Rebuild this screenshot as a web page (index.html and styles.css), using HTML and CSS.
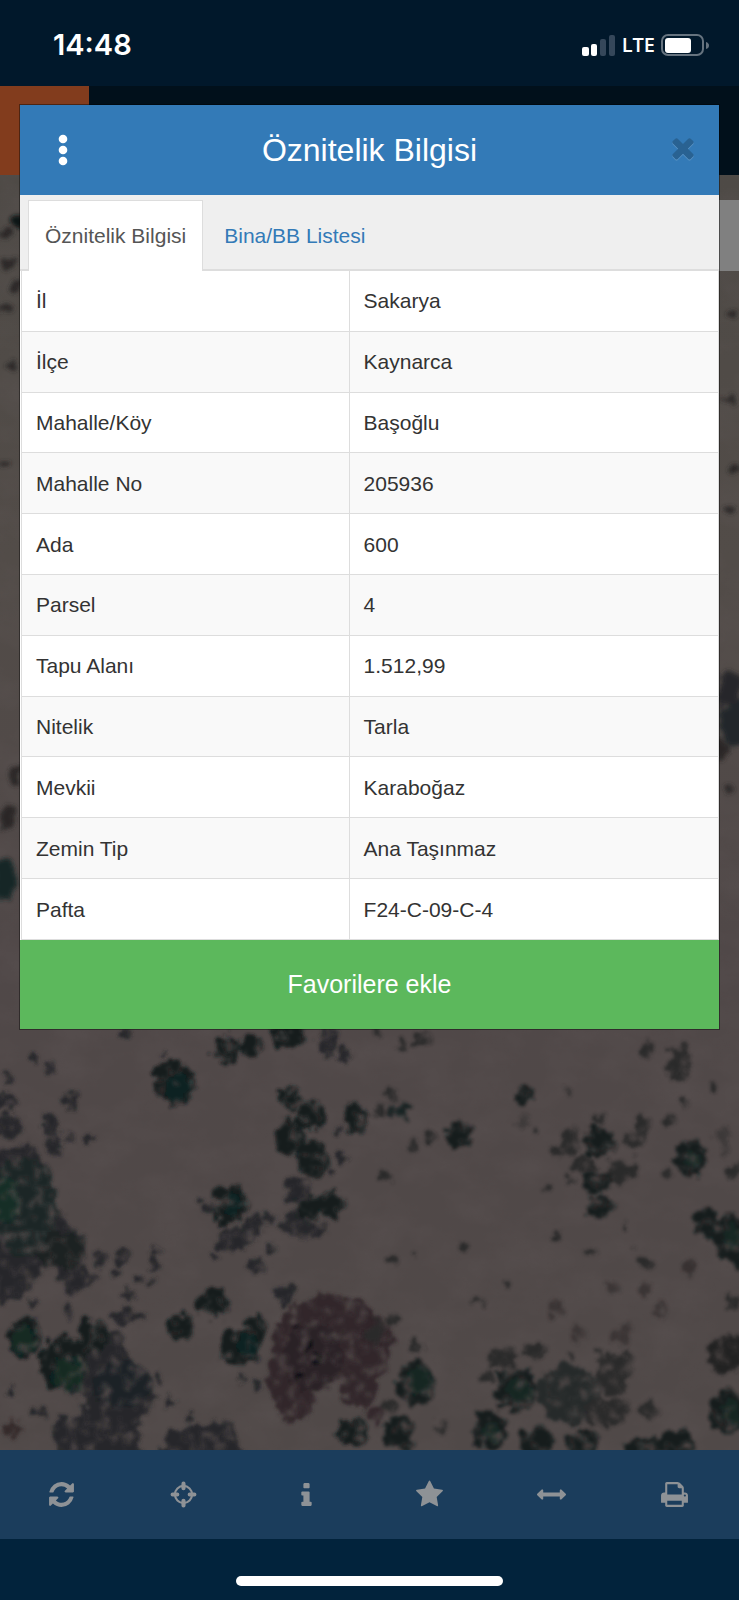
FILE: index.html
```html
<!DOCTYPE html>
<html lang="tr">
<head>
<meta charset="utf-8">
<meta name="viewport" content="width=device-width, initial-scale=1">
<title>Öznitelik Bilgisi</title>
<link rel="stylesheet" href="styles.css">
</head>
<body>
<div class="screen">
  <header class="status">
    <span class="clock">14:48</span>
    <div class="indicators">
      <svg class="signal" viewBox="0 0 34 22" aria-hidden="true">
        <rect x="0" y="13" width="7" height="9" rx="2" fill="#fff"/>
        <rect x="9" y="10" width="6" height="12" rx="2" fill="#fff"/>
        <rect x="18" y="5" width="6" height="17" rx="2" fill="#35475a"/>
        <rect x="27" y="1" width="6" height="21" rx="2" fill="#35475a"/>
      </svg>
      <span class="network">LTE</span>
      <svg class="battery" viewBox="0 0 48 22" aria-hidden="true">
        <rect x="1" y="1" width="41" height="20" rx="6" fill="none" stroke="#66737f" stroke-width="2"/>
        <rect x="4" y="4" width="26" height="15" rx="3" fill="#fff"/>
        <path d="M45 8q3 1 3 3.500t-3 3.500z" fill="#66737f"/>
      </svg>
    </div>
  </header>
  <div class="navbar"><div class="navbar-brand"></div></div>
  <main class="map">
    <svg class="imagery" viewBox="0 0 739 1275" preserveAspectRatio="xMidYMin slice" aria-hidden="true">
      <defs>
        <filter id="foliage" filterUnits="userSpaceOnUse" x="-60" y="-60" width="1260" height="1400">
          <feTurbulence type="fractalNoise" baseFrequency=".03" numOctaves="4" seed="8" result="n"/>
          <feDisplacementMap in="SourceGraphic" in2="n" scale="55" xChannelSelector="R" yChannelSelector="G" result="d"/>
          <feColorMatrix in="n" values="0 0 0 0 0 0 0 0 0 0 0 0 0 0 0 2.500 0 0 0 -.3" result="m"/>
          <feComposite in="d" in2="m" operator="in"/>
          <feGaussianBlur stdDeviation="4"/>
        </filter>
        <filter id="edge" filterUnits="userSpaceOnUse" x="-60" y="-60" width="860" height="1400">
          <feTurbulence type="fractalNoise" baseFrequency=".08" numOctaves="3" seed="4" result="n"/>
          <feDisplacementMap in="SourceGraphic" in2="n" scale="14" xChannelSelector="R" yChannelSelector="G"/>
          <feGaussianBlur stdDeviation="2"/>
        </filter>
        <filter id="grain" x="0" y="0" width="100%" height="100%">
          <feTurbulence type="fractalNoise" baseFrequency=".02 .03" numOctaves="5" seed="3"/>
          <feColorMatrix values="0 0 0 0 .12 0 0 0 0 .1 0 0 0 0 .1 .9 0 0 0 -.32"/>
        </filter>
        <linearGradient id="soil" x1="0" y1="0" x2="0" y2="1">
          <stop offset="0" stop-color="#4e4a46"/><stop offset=".3" stop-color="#524c48"/>
          <stop offset=".6" stop-color="#504848"/><stop offset="1" stop-color="#504948"/>
        </linearGradient>
      </defs>
      <rect width="739" height="1275" fill="url(#soil)"/>
      <rect width="739" height="1275" filter="url(#grain)" opacity=".6"/>
      <g filter="url(#edge)" fill="#292827">
        <circle cx="18" cy="46" r="6" fill="#111516"/><ellipse cx="5" cy="60" rx="6" ry="3"/>
        <ellipse cx="8" cy="88" rx="7" ry="4"/><ellipse cx="15" cy="112" rx="5" ry="3"/><ellipse cx="6" cy="135" rx="8" ry="3"/>
        <ellipse cx="12" cy="190" rx="6" ry="3"/><ellipse cx="4" cy="290" rx="6" ry="3"/><ellipse cx="14" cy="600" rx="6" ry="9"/>
        <ellipse cx="8" cy="642" rx="8" ry="12"/><ellipse cx="5" cy="705" rx="12" ry="22" fill="#182526"/>
        <ellipse cx="732" cy="139" rx="6" ry="3"/><ellipse cx="728" cy="225" rx="7" ry="3"/><ellipse cx="733" cy="293" rx="8" ry="3"/>
        <ellipse cx="729" cy="333" rx="6" ry="3"/><ellipse cx="730" cy="515" rx="13" ry="18" fill="#26272b"/><ellipse cx="735" cy="548" rx="14" ry="22" fill="#20272a"/>
        <ellipse cx="722" cy="575" rx="7" ry="10"/><ellipse cx="730" cy="612" rx="6" ry="3"/>
      </g>
      <g transform="translate(0 845) scale(.3333)">
        <g filter="url(#foliage)">
          <g fill="#25282a">
            <path d="M-50 400L90 370Q160 440 180 590L250 650L230 730L300 780L210 830L150 720L60 840L-50 850z"/>
            <path d="M170 990L350 930L420 1060L470 1130L420 1200L430 1330H190L150 1220L270 1160L140 1050z"/>
            <path d="M480 1330L500 1240L640 1200L700 1210L720 1280L790 1330z"/>
            <ellipse cx="20" cy="240" rx="32" ry="32"/><ellipse cx="25" cy="320" rx="42" ry="40"/>
            <ellipse cx="153" cy="315" rx="26" ry="30"/><ellipse cx="162" cy="375" rx="25" ry="38"/>
            <ellipse cx="215" cy="245" rx="22" ry="26"/><circle cx="98" cy="110" r="16"/><circle cx="147" cy="142" r="16"/>
            <circle cx="25" cy="180" r="16"/><circle cx="205" cy="352" r="15"/><circle cx="275" cy="357" r="13"/>
            <ellipse cx="376" cy="47" rx="20" ry="16"/><circle cx="487" cy="100" r="12"/>
            <ellipse cx="370" cy="715" rx="24" ry="25"/><ellipse cx="300" cy="715" rx="22" ry="24"/>
            <circle cx="347" cy="758" r="14"/><circle cx="460" cy="730" r="18"/><circle cx="468" cy="692" r="13"/>
            <circle cx="412" cy="780" r="14"/><circle cx="448" cy="782" r="12"/><circle cx="385" cy="825" r="17"/>
            <ellipse cx="385" cy="890" rx="50" ry="22"/><circle cx="200" cy="875" r="14"/><circle cx="100" cy="850" r="13"/>
            <circle cx="40" cy="1225" r="28" fill="#352b2b"/><circle cx="120" cy="1170" r="22"/><circle cx="35" cy="1115" r="14"/>
            <circle cx="510" cy="1150" r="18"/><circle cx="575" cy="1195" r="12"/><circle cx="475" cy="1070" r="12"/>
            <ellipse cx="985" cy="65" rx="32" ry="40"/><circle cx="1035" cy="105" r="22"/>
            <ellipse cx="705" cy="660" rx="52" ry="38"/><ellipse cx="765" cy="620" rx="30" ry="40"/>
            <circle cx="810" cy="595" r="14"/><circle cx="642" cy="705" r="12"/><circle cx="805" cy="685" r="18"/>
            <circle cx="770" cy="740" r="24"/><circle cx="625" cy="570" r="12"/><circle cx="605" cy="543" r="8"/>
            <ellipse cx="890" cy="515" rx="40" ry="42"/><ellipse cx="885" cy="615" rx="44" ry="40"/>
            <circle cx="950" cy="630" r="28"/><circle cx="1015" cy="345" r="12"/><circle cx="1025" cy="415" r="16"/>
            <circle cx="1003" cy="453" r="9"/><circle cx="860" cy="825" r="32"/><circle cx="730" cy="1080" r="12"/><circle cx="775" cy="1095" r="12"/>
          </g>
          <path d="M860 870L980 815L1100 850L1190 950L1110 1170L1040 1150L1015 1085L950 1100L930 1190L850 1210L800 1090L820 960z" fill="#302629"/>
          <ellipse cx="940" cy="1010" rx="90" ry="100" fill="#2b2226"/>
          <g fill="#121d1f">
            <circle cx="520" cy="187" r="66"/><ellipse cx="680" cy="90" rx="43" ry="46"/><circle cx="755" cy="77" r="33"/>
            <ellipse cx="865" cy="45" rx="50" ry="42"/><circle cx="868" cy="233" r="35"/><circle cx="938" cy="287" r="45"/>
            <ellipse cx="868" cy="350" rx="48" ry="54"/><ellipse cx="940" cy="420" rx="50" ry="60"/>
            <ellipse cx="1068" cy="295" rx="35" ry="45"/><ellipse cx="688" cy="553" rx="52" ry="58"/>
            <ellipse cx="990" cy="553" rx="43" ry="46"/><ellipse cx="925" cy="565" rx="35" ry="35"/><ellipse cx="637" cy="848" rx="48" ry="48"/>
            <ellipse cx="540" cy="920" rx="38" ry="40"/><ellipse cx="720" cy="985" rx="57" ry="57"/><ellipse cx="762" cy="935" rx="38" ry="42"/>
            <ellipse cx="1060" cy="1240" rx="45" ry="48"/><ellipse cx="180" cy="690" rx="75" ry="60" fill="#1c2023"/>
            <ellipse cx="70" cy="560" rx="100" ry="150" fill="#1a2525"/>
            <ellipse cx="75" cy="950" rx="48" ry="62"/><ellipse cx="190" cy="1030" rx="70" ry="85"/><ellipse cx="280" cy="950" rx="50" ry="55"/>
            <ellipse cx="370" cy="1090" rx="85" ry="70" fill="#1c2325"/>
          </g>
          <g fill="#12372a" opacity=".5">
            <ellipse cx="15" cy="540" rx="40" ry="70"/><ellipse cx="75" cy="960" rx="32" ry="42"/><ellipse cx="205" cy="1065" rx="42" ry="52"/>
            <ellipse cx="535" cy="200" rx="36" ry="40" opacity=".5"/><ellipse cx="700" cy="550" rx="28" ry="35" opacity=".4"/><ellipse cx="745" cy="975" rx="30" ry="35" opacity=".5"/>
          </g>
          <g fill="#111113"><circle cx="900" cy="1065" r="14"/><circle cx="950" cy="1020" r="15"/><circle cx="930" cy="970" r="10"/><circle cx="890" cy="915" r="10"/></g>
        </g>
      </g>
      <g transform="translate(369 845) scale(.3333)">
        <g filter="url(#foliage)">
          <g fill="#292929">
            <circle cx="100" cy="75" r="17"/><ellipse cx="160" cy="58" rx="25" ry="24"/><circle cx="25" cy="42" r="10"/>
            <circle cx="30" cy="268" r="17"/><circle cx="68" cy="223" r="14"/><ellipse cx="90" cy="268" rx="38" ry="28" fill="#182022"/>
            <circle cx="130" cy="375" r="20"/><circle cx="180" cy="350" r="18"/><circle cx="46" cy="472" r="22"/>
            <circle cx="592" cy="215" r="13"/><circle cx="500" cy="330" r="10"/><circle cx="460" cy="305" r="17" opacity=".5"/>
            <circle cx="833" cy="90" r="24"/><ellipse cx="930" cy="135" rx="36" ry="50"/><circle cx="940" cy="92" r="20"/>
            <circle cx="1033" cy="202" r="17"/><circle cx="903" cy="298" r="13"/><circle cx="940" cy="243" r="11"/>
            <ellipse cx="605" cy="365" rx="22" ry="48"/><circle cx="568" cy="393" r="19"/><ellipse cx="820" cy="320" rx="18" ry="46"/>
            <circle cx="790" cy="370" r="28"/><ellipse cx="650" cy="435" rx="34" ry="24"/><ellipse cx="745" cy="455" rx="34" ry="34"/>
            <circle cx="600" cy="480" r="15"/><circle cx="538" cy="505" r="14"/><circle cx="690" cy="297" r="14"/>
            <circle cx="795" cy="450" r="22"/><circle cx="890" cy="463" r="15"/><circle cx="1098" cy="455" r="20"/>
            <ellipse cx="1065" cy="365" rx="20" ry="45" opacity=".5"/><circle cx="770" cy="622" r="11"/><circle cx="785" cy="682" r="10"/>
            <circle cx="835" cy="728" r="20"/><circle cx="965" cy="742" r="27" fill="#393333"/><circle cx="75" cy="718" r="12"/>
            <circle cx="287" cy="682" r="12"/><circle cx="332" cy="847" r="12"/><circle cx="136" cy="697" r="9"/>
            <circle cx="420" cy="798" r="8"/><circle cx="570" cy="645" r="12"/><circle cx="668" cy="692" r="10"/>
            <g fill="#3b3535"><circle cx="730" cy="805" r="20"/><circle cx="830" cy="810" r="20"/><circle cx="563" cy="865" r="24"/><circle cx="757" cy="945" r="28"/><circle cx="627" cy="942" r="23"/><circle cx="875" cy="870" r="18"/></g>
            <circle cx="75" cy="900" r="22"/><circle cx="140" cy="973" r="19"/><ellipse cx="20" cy="930" rx="27" ry="38"/>
            <circle cx="1095" cy="850" r="25"/><ellipse cx="1075" cy="1000" rx="58" ry="62" fill="#222124"/>
            <ellipse cx="400" cy="1018" rx="48" ry="36"/><ellipse cx="490" cy="992" rx="42" ry="20"/><circle cx="603" cy="1007" r="15"/>
            <ellipse cx="600" cy="1120" rx="95" ry="88" fill="#26292c"/><ellipse cx="735" cy="1060" rx="50" ry="60"/><ellipse cx="715" cy="1175" rx="65" ry="42"/>
            <circle cx="837" cy="1172" r="27"/><circle cx="692" cy="1005" r="13"/><circle cx="770" cy="1005" r="18"/>
            <circle cx="355" cy="1070" r="19"/><circle cx="215" cy="1218" r="18"/><circle cx="65" cy="1160" r="24"/><ellipse cx="20" cy="1180" rx="22" ry="30" fill="#302629"/>
          </g>
          <g fill="#121d1f">
            <ellipse cx="466" cy="222" rx="31" ry="32"/><ellipse cx="270" cy="342" rx="42" ry="40"/><ellipse cx="690" cy="368" rx="48" ry="46"/>
            <ellipse cx="690" cy="485" rx="44" ry="30"/><ellipse cx="690" cy="558" rx="44" ry="36"/><ellipse cx="967" cy="415" rx="46" ry="55"/>
            <circle cx="1012" cy="607" r="40"/><ellipse cx="1085" cy="650" rx="52" ry="66"/><ellipse cx="1105" cy="705" rx="28" ry="38"/>
            <ellipse cx="138" cy="1090" rx="57" ry="66"/><ellipse cx="440" cy="1105" rx="65" ry="66"/><ellipse cx="362" cy="1230" rx="55" ry="57"/>
            <ellipse cx="90" cy="1240" rx="45" ry="52"/><ellipse cx="500" cy="1265" rx="55" ry="46"/><ellipse cx="640" cy="1270" rx="48" ry="42"/>
            <ellipse cx="825" cy="1282" rx="55" ry="35"/><ellipse cx="920" cy="1270" rx="58" ry="42"/><ellipse cx="1075" cy="1175" rx="55" ry="66"/>
          </g>
          <g fill="#12372a" opacity=".35"><ellipse cx="150" cy="1085" rx="35" ry="42"/><ellipse cx="455" cy="1115" rx="35" ry="38"/><ellipse cx="975" cy="415" rx="25" ry="30"/><ellipse cx="1090" cy="650" rx="25" ry="35"/><ellipse cx="1090" cy="1180" rx="30" ry="35"/><ellipse cx="365" cy="1240" rx="28" ry="28"/></g>
        </g>
      </g>
    </svg>
    <div class="map-control"></div>
  </main>
  <nav class="toolbar" aria-label="Harita araçları">
    <button type="button" aria-label="Yenile"><svg viewBox="-128 -128 1792 1792"><path d="M1511 928q0 5-1 7-64 268-268 434.500t-478 166.500q-146 0-282.500-55t-243.500-157l-129 129q-19 19-45 19t-45-19-19-45v-448q0-26 19-45t45-19h448q26 0 45 19t19 45-19 45l-137 137q71 66 161 102t187 36q134 0 250-65t186-179q11-17 53-117 8-23 30-23h192q13 0 22.500 9.500t9.500 22.500zm25-800v448q0 26-19 45t-45 19h-448q-26 0-45-19t-19-45 19-45l138-138q-148-137-349-137-134 0-250 65t-186 179q-11 17-53 117-8 23-30 23h-199q-13 0-22.500-9.500t-9.500-22.500v-7q65-268 270-434.500t480-166.500q146 0 284 55.500t245 156.500l130-129q19-19 45-19t45 19 19 45z"/></svg></button>
    <button type="button" aria-label="Konum"><svg viewBox="0 0 28 28"><circle cx="14" cy="14" r="8.300" fill="none" stroke="currentColor" stroke-width="2"/><path d="M14 3.500V8M14 20v4.500M3.500 14H8M20 14h4.500" stroke="currentColor" stroke-width="4" stroke-linecap="round"/></svg></button>
    <button type="button" aria-label="Bilgi"><svg viewBox="-576 -64 1792 1792"><path d="M640 1344v128q0 26-19 45t-45 19h-512q-26 0-45-19t-19-45v-128q0-26 19-45t45-19h64v-384h-64q-26 0-45-19t-19-45v-128q0-26 19-45t45-19h384q26 0 45 19t19 45v576h64q26 0 45 19t19 45zm-128-1152v192q0 26-19 45t-45 19h-256q-26 0-45-19t-19-45v-192q0-26 19-45t45-19h256q26 0 45 19t19 45z"/></svg></button>
    <button type="button" aria-label="Favoriler"><svg viewBox="-64 -32 1792 1792"><path d="M1664 615q0 22-26 48l-363 354 86 500q1 7 1 20 0 21-10.500 35.500t-30.500 14.500q-19 0-40-12l-449-236-449 236q-22 12-40 12-21 0-31.500-14.500t-10.500-35.500q0-6 2-20l86-500-364-354q-25-27-25-48 0-37 56-46l502-73 225-455q19-41 49-41t49 41l225 455 502 73q56 9 56 46z"/></svg></button>
    <button type="button" aria-label="Ölçüm"><svg viewBox="0 0 1792 1792"><path d="M1792 896q0 26-19 45l-256 256q-19 19-45 19t-45-19-19-45v-128h-1024v128q0 26-19 45t-45 19-45-19l-256-256q-19-19-19-45t19-45l256-256q19-19 45-19t45 19 19 45v128h1024v-128q0-26 19-45t45-19 45 19l256 256q19 19 19 45z"/></svg></button>
    <button type="button" aria-label="Yazdır"><svg viewBox="0 0 1792 1792"><path d="M448 1536h896v-256h-896v256zm0-640h896v-384h-160q-40 0-68-28t-28-68v-160h-640v640zm1152 64q0-26-19-45t-45-19-45 19-19 45 19 45 45 19 45-19 19-45zm128 0v416q0 13-9.500 22.500t-22.500 9.500h-224v160q0 40-28 68t-68 28h-960q-40 0-68-28t-28-68v-160h-224q-13 0-22.500-9.500t-9.500-22.500v-416q0-79 56.500-135.500t135.500-56.500h64v-544q0-40 28-68t68-28h672q40 0 88 20t76 48l152 152q28 28 48 76t20 88v256h64q79 0 135.500 56.500t56.500 135.500z"/></svg></button>
  </nav>
  <footer class="home-area"><div class="home-indicator"></div></footer>

  <section class="modal" role="dialog" aria-labelledby="modal-title">
    <header class="modal-header">
      <button type="button" class="icon-button" aria-label="Menü"><svg class="dots" viewBox="0 0 10 32"><circle cx="5" cy="5" r="4.300"/><circle cx="5" cy="16" r="4.300"/><circle cx="5" cy="27" r="4.300"/></svg></button>
      <h1 id="modal-title">Öznitelik Bilgisi</h1>
      <button type="button" class="icon-button close" aria-label="Kapat"><svg viewBox="0 132 1792 1792"><path d="M1490 1322q0 40-28 68l-136 136q-28 28-68 28t-68-28l-294-294-294 294q-28 28-68 28t-68-28l-136-136q-28-28-28-68t28-68l294-294-294-294q-28-28-28-68t28-68l136-136q28-28 68-28t68 28l294 294 294-294q28-28 68-28t68 28l136 136q28 28 28 68t-28 68l-294 294 294 294q28 28 28 68z"/></svg></button>
    </header>
    <nav class="tabs">
      <a class="tab active" href="#oznitelik">Öznitelik Bilgisi</a>
      <a class="tab" href="#bina">Bina/BB Listesi</a>
    </nav>
    <table class="attributes" id="oznitelik">
      <tbody>
        <tr><th scope="row">İl</th><td>Sakarya</td></tr>
        <tr><th scope="row">İlçe</th><td>Kaynarca</td></tr>
        <tr><th scope="row">Mahalle/Köy</th><td>Başoğlu</td></tr>
        <tr><th scope="row">Mahalle No</th><td>205936</td></tr>
        <tr><th scope="row">Ada</th><td>600</td></tr>
        <tr><th scope="row">Parsel</th><td>4</td></tr>
        <tr><th scope="row">Tapu Alanı</th><td>1.512,99</td></tr>
        <tr><th scope="row">Nitelik</th><td>Tarla</td></tr>
        <tr><th scope="row">Mevkii</th><td>Karaboğaz</td></tr>
        <tr><th scope="row">Zemin Tip</th><td>Ana Taşınmaz</td></tr>
        <tr><th scope="row">Pafta</th><td>F24-C-09-C-4</td></tr>
      </tbody>
    </table>
    <button type="button" class="favorite">Favorilere ekle</button>
  </section>
</div>
</body>
</html>
```
FILE: styles.css
```css
* {
  box-sizing: border-box;
}

body {
  margin: 0;
  background: #02233c;
  font-family: "Liberation Sans", Arial, sans-serif;
  font-size: 21px;
  color: #333;
}

button {
  margin: 0;
  padding: 0;
  border: 0;
  background: none;
  font: inherit;
}

svg {
  display: block;
  fill: currentColor;
}

.screen {
  position: relative;
  display: flex;
  flex-direction: column;
  min-height: 100vh;
}

/* Phone status bar */
.status {
  display: flex;
  align-items: center;
  justify-content: space-between;
  height: 86px;
  padding: 3px 30px 0 53px;
  background: #01182b;
  color: #fff;
}

.clock {
  font: 600 29px/34px Inter, sans-serif;
}

.indicators {
  display: flex;
  align-items: center;
  gap: 6px;
}

.signal {
  width: 34px;
  height: 22px;
}

.network {
  font: 600 20px/22px "Open Sans", sans-serif;
}

.battery {
  width: 48px;
  height: 22px;
}

.navbar {
  height: 89px;
  background: #01101b;
}

.navbar-brand {
  width: 89px;
  height: 100%;
  background: #823c1d;
}

/* Satellite map */
.map {
  position: relative;
  flex: 1;
  min-height: 900px;
  overflow: hidden;
  background: #4e4846;
}

.imagery {
  position: absolute;
  inset: 0;
  width: 100%;
  height: 100%;
}

.map-control {
  position: absolute;
  top: 25px;
  right: 0;
  width: 72px;
  height: 71px;
  background: #808080;
}

.toolbar {
  display: grid;
  grid-template-columns: repeat(6, 1fr);
  height: 89px;
  padding-right: 3px;
  background: #1b3d5c;
}

.toolbar button {
  display: flex;
  align-items: center;
  justify-content: center;
  color: #8e9296;
}

.toolbar svg {
  width: 29px;
  height: 29px;
}

.home-area {
  display: flex;
  justify-content: center;
  height: 61px;
  padding-top: 37px;
  background: #02233c;
}

.home-indicator {
  width: 36%;
  height: 10px;
  border-radius: 5px;
  background: #fff;
}

/* Attribute dialog */
.modal {
  position: absolute;
  top: 104px;
  left: 19px;
  right: 19px;
  border: 1px solid rgba(0, 0, 0, 0.4);
  background: #fff;
  background-clip: padding-box;
}

.modal-header {
  display: grid;
  grid-template-columns: 1fr auto 1fr;
  align-items: center;
  height: 90px;
  padding: 0 17px;
  background: #337ab7;
  color: #fff;
}

.modal-header h1 {
  margin: 0;
  font-size: 32px;
  font-weight: 400;
  line-height: 40px;
}

.icon-button {
  display: flex;
  align-items: center;
  justify-content: center;
  width: 52px;
  height: 52px;
  color: #fff;
}

.dots {
  width: 10px;
  height: 32px;
}

.close {
  justify-self: end;
  width: 38px;
  color: #296292;
}

.close svg {
  width: 32px;
  height: 32px;
  filter: drop-shadow(0 1px 0 #5c95c5);
}

.tabs {
  display: flex;
  gap: 4px;
  height: 76px;
  padding: 5px 8px 0;
  border-bottom: 2px solid #ddd;
  background: #efefef;
}

.tab {
  height: 71px;
  padding: 0 16px;
  border: 1px solid transparent;
  border-bottom: 0;
  color: #337ab7;
  line-height: 69px;
  text-decoration: none;
}

.tab.active {
  border-color: #ddd;
  background: #fff;
  color: #555;
}

.attributes {
  width: calc(100% - 1px);
  height: 669px;
  margin-left: 1px;
  border-collapse: collapse;
  line-height: 30px;
}

.attributes th,
.attributes td {
  padding: 15px 14px 14px;
  border: 1px solid #ddd;
  font-weight: 400;
  text-align: left;
}

.attributes tr:first-child > * {
  border-top: 0;
}

.attributes th {
  width: 47%;
}

.attributes tr:nth-child(even) {
  background: #f9f9f9;
}

.favorite {
  display: block;
  width: 100%;
  height: 89px;
  background: #5cb85c;
  color: #fff;
  font-size: 25px;
}
```
